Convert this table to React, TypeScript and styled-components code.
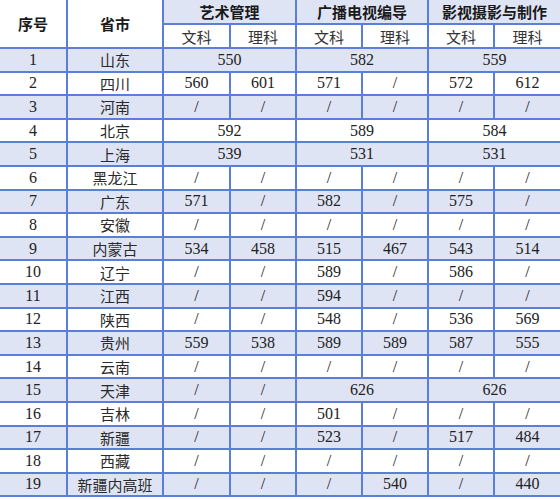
import styled, { createGlobalStyle } from 'styled-components';

const GlobalStyle = createGlobalStyle`
  html, body {
    margin: 0;
    padding: 0;
    background: #ffffff;
  }
`;

const LINE = '#5b7fd9';
const SHADE = '#dfe4f4';

const Page = styled.div`
  width: 560px;
  height: 500px;
  overflow: hidden;
  background: #ffffff;
`;

const Table = styled.table`
  width: 560px;
  border-collapse: collapse;
  table-layout: fixed;
  font-family: 'Liberation Serif', 'Noto Sans CJK SC', serif;
  color: #222222;

  td, th {
    border: 2px solid ${LINE};
    padding: 0;
    text-align: center;
    vertical-align: middle;
    white-space: nowrap;
  }

  tr > *:first-child {
    border-left: none;
  }

  tr > *:last-child {
    border-right: none;
  }

  thead tr:first-child > * {
    border-top: none;
  }
`;

const Col = styled.col<{ $w: number }>`
  width: ${({ $w }) => $w}px;
`;

const HeadCell = styled.th<{ $shaded?: boolean }>`
  font-family: 'Noto Sans CJK SC', sans-serif;
  font-weight: 700;
  font-size: 15px;
  color: #1a1a1a;
  background: ${({ $shaded }) => ($shaded ? SHADE : '#ffffff')};
`;

const SubHeadCell = styled.th`
  font-family: 'Noto Sans CJK SC', sans-serif;
  font-weight: 400;
  font-size: 15px;
  color: #333333;
  background: #ffffff;
`;

const HeadRow = styled.tr`
  height: 24px;
`;

const Row = styled.tr<{ $shaded: boolean }>`
  height: 23.6px;
  background: ${({ $shaded }) => ($shaded ? SHADE : '#ffffff')};
`;

const Cell = styled.td`
  font-size: 16px;
  line-height: 1;
`;

const NameCell = styled.td`
  font-family: 'Noto Sans CJK SC', sans-serif;
  font-size: 15px;
  line-height: 1;
  color: #2a2a2a;
`;

type Value = string | [string];

const widths = [67, 96, 67, 66, 66, 66, 66, 66];

const rows: { name: string; values: Value[] }[] = [
  { name: '山东', values: [['550'], ['582'], ['559']] },
  { name: '四川', values: ['560', '601', '571', '/', '572', '612'] },
  { name: '河南', values: ['/', '/', '/', '/', '/', '/'] },
  { name: '北京', values: [['592'], ['589'], ['584']] },
  { name: '上海', values: [['539'], ['531'], ['531']] },
  { name: '黑龙江', values: ['/', '/', '/', '/', '/', '/'] },
  { name: '广东', values: ['571', '/', '582', '/', '575', '/'] },
  { name: '安徽', values: ['/', '/', '/', '/', '/', '/'] },
  { name: '内蒙古', values: ['534', '458', '515', '467', '543', '514'] },
  { name: '辽宁', values: ['/', '/', '589', '/', '586', '/'] },
  { name: '江西', values: ['/', '/', '594', '/', '/', '/'] },
  { name: '陕西', values: ['/', '/', '548', '/', '536', '569'] },
  { name: '贵州', values: ['559', '538', '589', '589', '587', '555'] },
  { name: '云南', values: ['/', '/', '/', '/', '/', '/'] },
  { name: '天津', values: ['/', '/', ['626'], ['626']] },
  { name: '吉林', values: ['/', '/', '501', '/', '/', '/'] },
  { name: '新疆', values: ['/', '/', '523', '/', '517', '484'] },
  { name: '西藏', values: ['/', '/', '/', '/', '/', '/'] },
  { name: '新疆内高班', values: ['/', '/', '/', '540', '/', '440'] },
];

const majors = ['艺术管理', '广播电视编导', '影视摄影与制作'];

const App = () => (
  <Page>
    <GlobalStyle />
    <Table>
      <colgroup>
        {widths.map((w, i) => (
          <Col key={i} $w={w} />
        ))}
      </colgroup>
      <thead>
        <HeadRow>
          <HeadCell rowSpan={2}>序号</HeadCell>
          <HeadCell rowSpan={2}>省市</HeadCell>
          {majors.map((m) => (
            <HeadCell key={m} colSpan={2} $shaded>
              {m}
            </HeadCell>
          ))}
        </HeadRow>
        <HeadRow>
          {majors.map((m) => [
            <SubHeadCell key={`${m}-w`}>文科</SubHeadCell>,
            <SubHeadCell key={`${m}-l`}>理科</SubHeadCell>,
          ])}
        </HeadRow>
      </thead>
      <tbody>
        {rows.map((r, i) => (
          <Row key={r.name} $shaded={i % 2 === 0}>
            <Cell>{i + 1}</Cell>
            <NameCell>{r.name}</NameCell>
            {r.values.map((v, j) =>
              Array.isArray(v) ? (
                <Cell key={j} colSpan={2}>
                  {v[0]}
                </Cell>
              ) : (
                <Cell key={j}>{v}</Cell>
              ),
            )}
          </Row>
        ))}
      </tbody>
    </Table>
  </Page>
);

export default App;
